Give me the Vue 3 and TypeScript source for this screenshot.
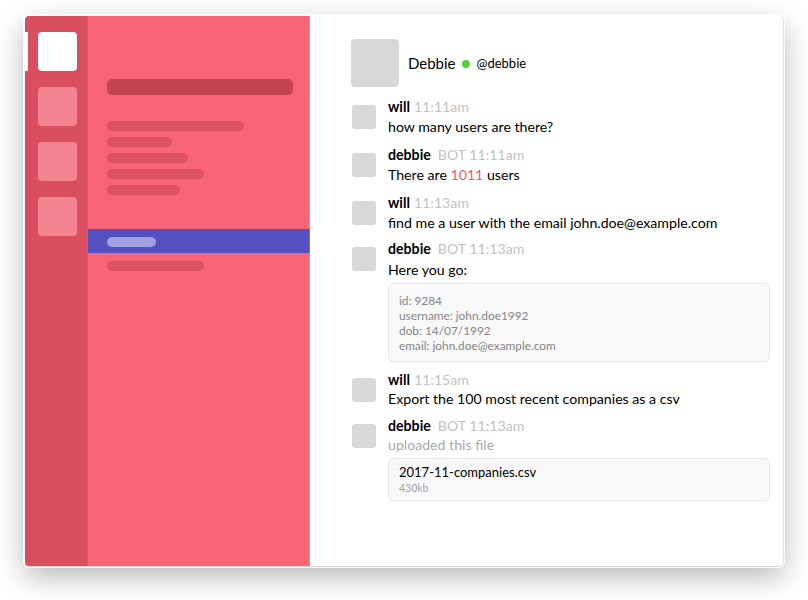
<template>
  <div class="page">
    <div class="window">
      <aside class="rail">
        <div v-for="n in 4" :key="n" class="team" :class="{ active: n === 1 }"></div>
      </aside>
      <nav class="sidebar">
        <div class="title-bar"></div>
        <div class="channels">
          <div v-for="w in channelWidths" :key="w" class="line" :style="{ width: w + 'px' }"></div>
        </div>
        <div class="active-row"><div class="pill"></div></div>
        <div class="line" :style="{ width: '97px' }"></div>
      </nav>
      <main class="chat">
        <header class="chat-head">
          <div class="head-avatar"></div>
          <span class="head-name">Debbie</span>
          <span class="dot"></span>
          <span class="handle">@debbie</span>
        </header>
        <div v-for="m in messages" :key="m.id" class="msg" :style="{ marginTop: m.gap + 'px' }">
          <div class="avatar"></div>
          <div class="body">
            <div class="meta">
              <b>{{ m.name }}</b>
              <span class="time" :class="{ bot: m.bot }">{{ m.bot ? 'BOT ' : '' }}{{ m.time }}</span>
            </div>
            <div v-if="m.id === 2" class="text">There are <span class="red">1011</span> users</div>
            <div v-else class="text" :class="{ muted: m.id === 6 }" :style="{ marginTop: m.textGap + 'px' }">{{ m.text }}</div>
            <div v-if="m.id === 4" class="card details">
              <div>id: 9284</div>
              <div>username: john.doe1992</div>
              <div>dob: 14/07/1992</div>
              <div>email: john.doe@example.com</div>
            </div>
            <div v-if="m.id === 6" class="card file">
              <div class="file-name">2017-11-companies.csv</div>
              <div class="file-size">430kb</div>
            </div>
          </div>
        </div>
      </main>
    </div>
  </div>
</template>

<script setup lang="ts">
interface Message {
  id: number
  name: string
  time: string
  text: string
  bot: boolean
  gap: number
  textGap: number
}

const channelWidths = [137, 65, 81, 97, 73]

const messages: Message[] = [
  { id: 1, name: 'will', time: '11:11am', text: 'how many users are there?', bot: false, gap: 10, textGap: 0 },
  { id: 2, name: 'debbie', time: '11:11am', text: '', bot: true, gap: 8, textGap: 0 },
  { id: 3, name: 'will', time: '11:13am', text: 'find me a user with the email john.doe@example.com', bot: false, gap: 8, textGap: 0 },
  { id: 4, name: 'debbie', time: '11:13am', text: 'Here you go:', bot: true, gap: 6, textGap: 1 },
  { id: 5, name: 'will', time: '11:15am', text: 'Export the 100 most recent companies as a csv', bot: false, gap: 8, textGap: -1 },
  { id: 6, name: 'debbie', time: '11:13am', text: 'uploaded this file', bot: true, gap: 7, textGap: -1 }
]
</script>

<style>
html,
body {
  margin: 0;
  background: #fff;
}
</style>

<style scoped>
.page {
  width: 808px;
  height: 600px;
  padding: 16px 0 0 25px;
  box-sizing: border-box;
  overflow: hidden;
  font-family: Lato, "Noto Sans", sans-serif;
  color: #000;
}

.window {
  width: 758px;
  height: 550px;
  display: flex;
  background: #fff;
  border-radius: 4px;
  overflow: hidden;
  box-shadow: 1px 0 0 #e2e2e2, 0 1px 0 #d6d6d6, 0 0 0 2px rgba(255, 255, 255, 0.85), 0 10px 30px rgba(0, 0, 0, 0.3);
}

.rail {
  width: 63px;
  flex: none;
  box-sizing: border-box;
  padding: 16px 0 0 13px;
  display: flex;
  flex-direction: column;
  gap: 16px;
  background: #d94f5f;
  border-right: 1px solid #e65b6a;
}

.team {
  position: relative;
  width: 39px;
  height: 39px;
  border-radius: 4px;
  background: #f58491;
}

.team.active {
  background: #fff;
}

.team.active::before {
  content: "";
  position: absolute;
  left: -13px;
  top: 0;
  width: 3px;
  height: 39px;
  background: #fff;
}

.sidebar {
  width: 222px;
  flex: none;
  box-sizing: border-box;
  padding: 63px 0 0 19px;
  background: #f66475;
  box-shadow: inset -1px 0 rgba(255, 255, 255, 0.2);
}

.title-bar {
  width: 186px;
  height: 16px;
  border-radius: 5px;
  background: #c44353;
}

.channels {
  margin-top: 26px;
  display: flex;
  flex-direction: column;
  gap: 6px;
}

.line {
  height: 10px;
  border-radius: 5px;
  background: #db5261;
}

.active-row {
  height: 24px;
  margin: 34px 0 8px -19px;
  padding: 8px 0 0 19px;
  box-sizing: border-box;
  background: #5450c0;
  box-shadow: inset -1px 0 rgba(255, 255, 255, 0.15);
}

.pill {
  width: 49px;
  height: 10px;
  border-radius: 5px;
  background: #a3a0e2;
}

.chat {
  flex: 1;
  padding: 23px 13px 0 41px;
  min-width: 0;
}

.chat-head {
  display: flex;
  align-items: center;
  height: 48px;
}

.head-avatar {
  width: 48px;
  height: 48px;
  border-radius: 4px;
  background: #d8d8d8;
  margin-right: 9px;
}

.head-name {
  font-size: 15px;
}

.dot {
  width: 8px;
  height: 8px;
  border-radius: 50%;
  background: #4fd13c;
  margin: 1px 7px 0 6px;
}

.handle {
  font-size: 13px;
}

.msg {
  display: flex;
  padding-left: 1px;
}

.avatar {
  width: 24px;
  height: 24px;
  margin-top: 8px;
  margin-right: 12px;
  flex: none;
  border-radius: 3px;
  background: #d8d8d8;
}

.body {
  flex: 1;
  min-width: 0;
}

.meta,
.text {
  font-size: 14.15px;
  line-height: 20px;
}

.meta b {
  font-weight: 700;
}

.time {
  color: #c2c2c2;
  margin-left: 4px;
}

.time.bot {
  margin-left: 7px;
}

.red {
  color: #f05a63;
}

.muted {
  color: #a8a8ad;
}

.card {
  box-sizing: border-box;
  margin-top: 3px;
  border: 1px solid #e8e8e8;
  border-radius: 5px;
  background: #f8f8f8;
  padding: 9px 10px;
}

.details {
  height: 79px;
  font-size: 11.85px;
  line-height: 15px;
  color: #85858a;
}

.file {
  height: 43px;
  padding-top: 5px;
}

.file-name {
  font-size: 13px;
  line-height: 17px;
}

.file-size {
  font-size: 10.5px;
  line-height: 12px;
  margin-top: 1px;
  color: #a4a4a8;
}
</style>
